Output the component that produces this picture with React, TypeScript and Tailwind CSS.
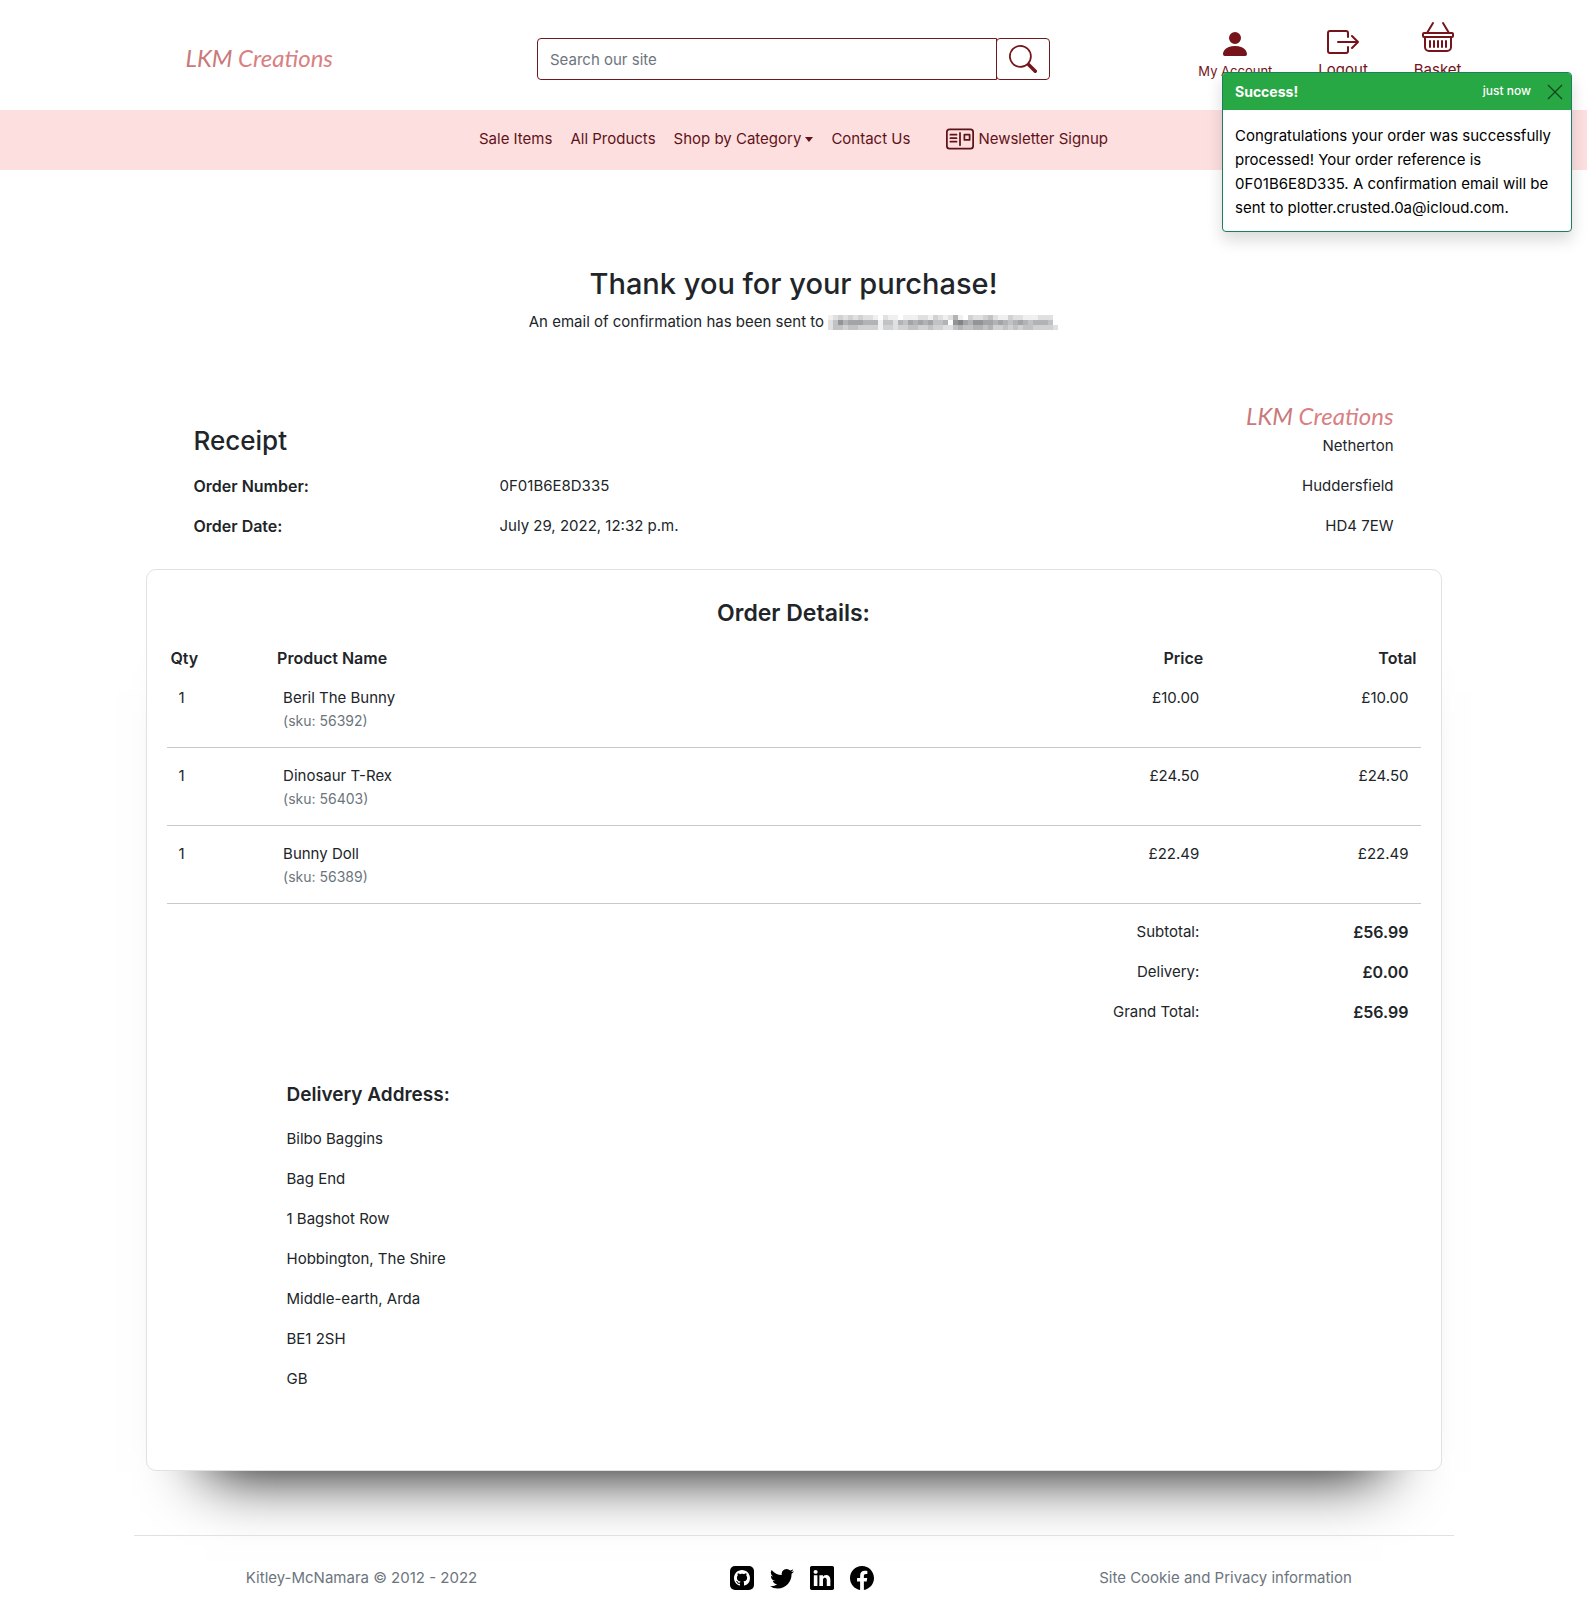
import React from "react";
import {
  BsBasket,
  BsBoxArrowRight,
  BsFacebook,
  BsGithub,
  BsLinkedin,
  BsPersonFill,
  BsPostcard,
  BsSearch,
  BsTwitter,
} from "react-icons/bs";

const items = [
  { qty: 1, name: "Beril The Bunny", sku: "56392", price: "£10.00", total: "£10.00" },
  { qty: 1, name: "Dinosaur T-Rex", sku: "56403", price: "£24.50", total: "£24.50" },
  { qty: 1, name: "Bunny Doll", sku: "56389", price: "£22.49", total: "£22.49" },
];

const totals = [
  { label: "Subtotal:", value: "£56.99" },
  { label: "Delivery:", value: "£0.00" },
  { label: "Grand Total:", value: "£56.99" },
];

const address = [
  "Bilbo Baggins",
  "Bag End",
  "1 Bagshot Row",
  "Hobbington, The Shire",
  "Middle-earth, Arda",
  "BE1 2SH",
  "GB",
];

function Logo() {
  return (
    <span className="font-[Lato,sans-serif] text-2xl leading-7 italic whitespace-nowrap text-[#d98083]">
      <span className="text-[#c9797b]">LKM</span> Creations
    </span>
  );
}

// Shades of the redacted address, three rows of square blocks, 0 (clear) to 9 (dark).
const mosaicRows = [
  "1232323221021101112213212510322342113221112220",
  "2475666555144254656564450786577665654565455540",
  "2443443333133233443343322454455453343434433332",
];

function RedactedEmail() {
  return (
    <svg
      role="img"
      aria-label="Hidden email address"
      viewBox="0 0 230 15"
      shapeRendering="crispEdges"
      className="inline-block h-[15px] w-[230px] align-middle"
    >
      {mosaicRows.map((row, y) =>
        row.split("").map((level, x) => (
          <rect
            key={`${x}-${y}`}
            x={x * 5}
            y={y * 5}
            width="5"
            height="5"
            fill="#3c4044"
            fillOpacity={Number(level) * 0.08}
          />
        )),
      )}
    </svg>
  );
}

function Header() {
  return (
    <header>
      <div className="mx-auto grid h-[110px] max-w-[1344px] grid-cols-[1fr_513px_1fr]">
        <div className="flex items-center pt-2 pl-16">
          <a href="#home">
            <Logo />
          </a>
        </div>
        <form className="flex items-start pt-[38px]">
          <input
            type="search"
            aria-label="Search our site"
            placeholder="Search our site"
            className="h-[42px] min-w-0 flex-1 rounded-l border border-[#701a1f] px-3 placeholder:text-[#6c757d]"
          />
          <button
            type="button"
            aria-label="Search"
            className="-ml-px flex h-[42px] w-[54px] items-center justify-center rounded border border-[#701a1f] text-[#75151b]"
          >
            <BsSearch size={28} />
          </button>
        </form>
        <div className="flex items-start justify-end gap-[46px] pr-1 text-[#75151b]">
          <a href="#account" className="flex flex-col items-center pt-7 text-[13px] leading-[22px]">
            <BsPersonFill size={32} />
            <span>My Account</span>
          </a>
          <a href="#logout" className="flex flex-col items-center pt-[26px] leading-6">
            <BsBoxArrowRight size={32} />
            <span>Logout</span>
          </a>
          <a href="#basket" className="flex flex-col items-center gap-[6px] pt-5 leading-6">
            <BsBasket size={32} />
            <span>Basket</span>
          </a>
        </div>
      </div>
      <nav className="flex h-[60px] items-center justify-center gap-[18px] bg-[#fddfe0] pb-[2px] text-[#5f1318]">
        <a href="#sale">Sale Items</a>
        <a href="#products">All Products</a>
        <button type="button" className="flex items-center gap-1">
          Shop by Category
          <span className="border-x-4 border-t-[5px] border-x-transparent border-t-[#5f1318]" />
        </button>
        <a href="#contact">Contact Us</a>
        <a href="#newsletter" className="flex items-center gap-1 pl-[18px]">
          <BsPostcard size={28} />
          Newsletter Signup
        </a>
      </nav>
    </header>
  );
}

function Toast() {
  return (
    <div
      role="status"
      className="absolute top-[72px] right-[15px] w-[350px] rounded border border-[#1b7f5c] bg-white text-black shadow-[0_8px_16px_rgba(0,0,0,0.15)]"
    >
      <div className="flex h-[37px] items-center rounded-t-[3px] bg-[#28a745] px-3 text-white">
        <strong className="mr-auto text-sm font-bold">Success!</strong>
        <small className="pb-[2px] text-xs font-medium">just now</small>
        <button type="button" aria-label="Close" className="ml-4 -mr-1 text-black/60">
          <svg viewBox="0 0 16 16" className="size-4" stroke="currentColor" strokeWidth="1.2">
            <path d="M1 1 15 15M15 1 1 15" />
          </svg>
        </button>
      </div>
      <p className="px-3 pt-[14px] pb-[11px] leading-6">
        Congratulations your order was successfully processed! Your order reference is 0F01B6E8D335. A
        confirmation email will be sent to plotter.crusted.0a@icloud.com.
      </p>
    </div>
  );
}

function ReceiptHeading() {
  return (
    <section className="mx-auto grid max-w-[1320px] grid-cols-4 gap-x-6 px-[60px] pt-[68px]">
      <div className="col-span-2 pt-[21px]">
        <h2 className="text-[26px] leading-9 font-medium">Receipt</h2>
        <dl className="mt-[15px] grid grid-cols-2 gap-x-6 gap-y-4">
          <dt className="text-base font-semibold">Order Number:</dt>
          <dd>0F01B6E8D335</dd>
          <dt className="text-base font-semibold">Order Date:</dt>
          <dd>July 29, 2022, 12:32 p.m.</dd>
        </dl>
      </div>
      <div className="col-span-2 flex flex-col items-end">
        <Logo />
        <address className="mt-1 flex flex-col items-end gap-4 not-italic">
          <span>Netherton</span>
          <span>Huddersfield</span>
          <span>HD4 7EW</span>
        </address>
      </div>
    </section>
  );
}

function OrderCard() {
  return (
    <section className="mx-auto mt-[31px] max-w-[1296px] rounded-[10px] border border-[#dee2e6] bg-white px-5 pt-[27px] pb-[79px] shadow-[0_62px_60px_-60px_rgba(0,0,0,1)]">
      <h2 className="text-center text-[23px] leading-8 font-semibold">Order Details:</h2>
      <table className="mt-[17px] w-full table-fixed">
        <colgroup>
          <col className="w-[8.5%]" />
          <col />
          <col className="w-[17%]" />
          <col className="w-[17%]" />
        </colgroup>
        <thead className="text-base">
          <tr>
            <th className="px-1 text-left font-semibold">Qty</th>
            <th className="px-1 text-left font-semibold">Product Name</th>
            <th className="px-1 text-right font-semibold">Price</th>
            <th className="px-1 text-right font-semibold">Total</th>
          </tr>
        </thead>
        <tbody>
          {items.map((item) => (
            <tr key={item.sku} className="border-b border-[#c8c9cb] align-top">
              <td className="px-3 pt-4">{item.qty}</td>
              <td className="px-[10px] py-4">
                {item.name}
                <small className="block text-sm leading-[21px] text-[#6c757d]">(sku: {item.sku})</small>
              </td>
              <td className="px-2 pt-4 text-right">{item.price}</td>
              <td className="px-3 pt-4 text-right">{item.total}</td>
            </tr>
          ))}
        </tbody>
        <tfoot>
          {totals.map((row) => (
            <tr key={row.label}>
              <th colSpan={3} className="px-2 pt-4 text-right font-normal">
                {row.label}
              </th>
              <td className="px-3 pt-4 text-right text-base font-semibold">{row.value}</td>
            </tr>
          ))}
        </tfoot>
      </table>
      <div className="mt-14 pl-[120px]">
        <h3 className="text-[19px] leading-[30px] font-semibold">Delivery Address:</h3>
        <address className="mt-[17px] flex flex-col gap-4 not-italic">
          {address.map((line) => (
            <span key={line}>{line}</span>
          ))}
        </address>
      </div>
    </section>
  );
}

function Footer() {
  return (
    <footer className="mx-auto mt-16 max-w-[1320px] border-t border-[#dee2e6] px-3 pt-[30px] pb-8 text-[#6c757d]">
      <div className="grid grid-cols-3 items-center text-center">
        <p>Kitley-McNamara © 2012 - 2022</p>
        <div className="flex items-center justify-center gap-4 pl-4 text-black">
          <a
            href="#github"
            aria-label="GitHub"
            className="flex size-6 items-center justify-center rounded-[5px] bg-black text-white"
          >
            <BsGithub size={16} />
          </a>
          <a href="#twitter" aria-label="Twitter">
            <BsTwitter size={24} />
          </a>
          <a href="#linkedin" aria-label="LinkedIn">
            <BsLinkedin size={24} />
          </a>
          <a href="#facebook" aria-label="Facebook">
            <BsFacebook size={24} />
          </a>
        </div>
        <a href="#privacy">Site Cookie and Privacy information</a>
      </div>
    </footer>
  );
}

export default function App() {
  return (
    <div className="relative min-h-screen bg-white font-[Inter,sans-serif] text-[15px] leading-6 text-[#212529]">
      <Header />
      <main>
        <div className="pt-[94px] text-center">
          <h1 className="text-[29px] leading-10 font-medium">Thank you for your purchase!</h1>
          <p className="mt-[6px]">
            An email of confirmation has been sent to <RedactedEmail />
          </p>
        </div>
        <ReceiptHeading />
        <OrderCard />
      </main>
      <Footer />
      <Toast />
    </div>
  );
}
